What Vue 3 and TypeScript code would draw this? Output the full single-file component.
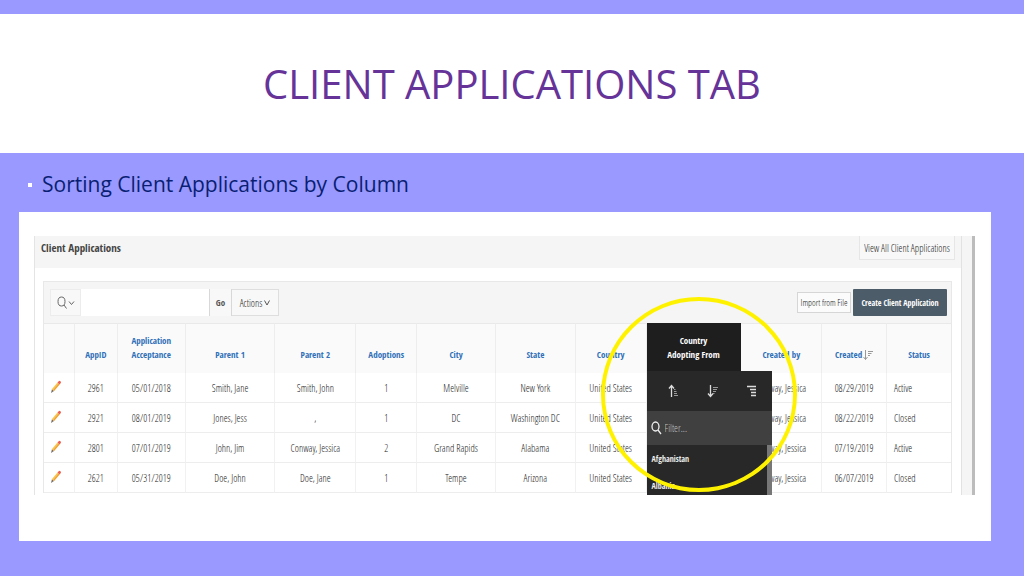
<script setup lang="ts">
import { ref } from 'vue'

interface Column {
  label: string
  weight: number
}

interface Application {
  id: string
  cells: string[]
  createdBy: string
  created: string
  status: string
}

const columns: Column[] = [
  { label: '', weight: 31 },
  { label: 'AppID', weight: 43 },
  { label: 'Application\nAcceptance', weight: 68 },
  { label: 'Parent 1', weight: 90 },
  { label: 'Parent 2', weight: 81 },
  { label: 'Adoptions', weight: 61 },
  { label: 'City', weight: 79 },
  { label: 'State', weight: 80 },
  { label: 'Country', weight: 71 },
  { label: 'Country\nAdopting From', weight: 95 },
  { label: 'Created by', weight: 81 },
  { label: 'Created', weight: 65 },
  { label: 'Status', weight: 64 },
]
const totalWeight = columns.reduce((sum, c) => sum + c.weight, 0)

const rows: Application[] = [
  { id: '2961', cells: ['05/01/2018', 'Smith, Jane', 'Smith, John', '1', 'Melville', 'New York', 'United States'], createdBy: 'Conway, Jessica', created: '08/29/2019', status: 'Active' },
  { id: '2921', cells: ['08/01/2019', 'Jones, Jess', ',', '1', 'DC', 'Washington DC', 'United States'], createdBy: 'Conway, Jessica', created: '08/22/2019', status: 'Closed' },
  { id: '2801', cells: ['07/01/2019', 'John, Jim', 'Conway, Jessica', '2', 'Grand Rapids', 'Alabama', 'United States'], createdBy: 'Conway, Jessica', created: '07/19/2019', status: 'Active' },
  { id: '2621', cells: ['05/31/2019', 'Doe, John', 'Doe, Jane', '1', 'Tempe', 'Arizona', 'United States'], createdBy: 'Conway, Jessica', created: '06/07/2019', status: 'Closed' },
]

const countries = ['Afghanistan', 'Albania']
const search = ref('')
const filter = ref('')
</script>

<template>
  <main class="slide">
    <header class="banner">
      <h1>CLIENT APPLICATIONS TAB</h1>
    </header>

    <ul class="points">
      <li>Sorting Client Applications by Column</li>
    </ul>

    <section class="card">
      <div class="capture">
        <div class="page">
          <div class="page-head">
            <h2>Client Applications</h2>
            <button type="button" class="view-all">View All Client Applications</button>
          </div>

          <div class="report">
            <div class="toolbar">
              <button type="button" class="picker" aria-label="Select columns to search">
                <svg width="18" height="14" viewBox="0 0 18 14" fill="none" stroke="#666" stroke-width="1">
                  <ellipse cx="4.5" cy="5.5" rx="3.5" ry="4.5" />
                  <path d="M7 9l2.500 3.500M12 5.500l2.500 3 2.500-3" />
                </svg>
              </button>
              <input v-model="search" type="search" class="search" aria-label="Search applications" />
              <button type="button" class="go">Go</button>
              <button type="button" class="actions">
                Actions
                <svg width="6" height="6" viewBox="0 0 6 6" fill="none" stroke="#555"><path d="M.5.5L3 5 5.500.5" /></svg>
              </button>
              <span class="spacer"></span>
              <button type="button" class="import">Import from File</button>
              <button type="button" class="create">Create Client Application</button>
            </div>

            <table>
              <colgroup>
                <col v-for="(c, i) in columns" :key="i" :style="{ width: (c.weight / totalWeight) * 100 + '%' }" />
              </colgroup>
              <thead>
                <tr>
                  <th v-for="(c, i) in columns" :key="i" scope="col" :class="{ open: i === 9 }">
                    <span class="label">{{ c.label }}</span>
                    <svg v-if="c.label === 'Created'" class="sorted" width="10" height="10" viewBox="0 0 10 10" fill="none" stroke="#999">
                      <path d="M2.500 0v9.500M.5 7l2 2.500 2-2.500M5 1.500h5M5 3.500h3.500M5 5.500h2" />
                    </svg>
                    <template v-if="i === 9">
                      <div class="menu">
                        <div class="sorts">
                          <button type="button" aria-label="Sort ascending">
                            <svg width="12" height="14" viewBox="0 0 12 14" fill="none" stroke="#ddd">
                              <path stroke-width="1.300" d="M3.500 13V1.500M1 4.500l2.500-3 2.500 3" />
                              <path stroke="#999" d="M6 5.500h1.500M6 7.500h2.500M6 9.500h3M6 11.500h4" />
                            </svg>
                          </button>
                          <button type="button" aria-label="Sort descending">
                            <svg width="12" height="14" viewBox="0 0 12 14" fill="none" stroke="#ddd">
                              <path stroke-width="1.300" d="M3.500 1v11.500M1 9.500l2.500 3 2.500-3" />
                              <path stroke="#999" d="M6 3.500h5M6 5.500h4M6 7.500h3M6 9.500h1.500" />
                            </svg>
                          </button>
                          <button type="button" aria-label="Control break">
                            <svg width="12" height="14" viewBox="0 0 12 14" fill="none" stroke="#ddd" stroke-width="1.300">
                              <path d="M1 2.500h9M4 5.500h6M5 8.500h5M5 11.500h5" />
                            </svg>
                          </button>
                        </div>
                        <label class="filter">
                          <svg width="11" height="14" viewBox="0 0 11 14" fill="none" stroke="#eee" stroke-width="1.300">
                            <ellipse cx="4.500" cy="5.500" rx="3.500" ry="4.500" />
                            <path d="M7 9l3 4" />
                          </svg>
                          <input v-model="filter" type="text" placeholder="Filter..." aria-label="Filter" />
                        </label>
                        <ul class="options">
                          <li v-for="name in countries" :key="name"><button type="button">{{ name }}</button></li>
                        </ul>
                        <span class="thumb"></span>
                      </div>
                      <span class="ring"></span>
                    </template>
                  </th>
                </tr>
              </thead>
              <tbody>
                <tr v-for="r in rows" :key="r.id">
                  <td>
                    <button type="button" class="edit" :aria-label="'Edit ' + r.id">
                      <svg width="12" height="14" viewBox="0 0 12 14">
                        <path d="M1 13l1-4 2 2z" fill="#77706a" />
                        <path d="M2 9l5.500-6.500 2 2L4 11z" fill="#f9c650" />
                        <path d="M3.200 10.200l5.400-6.700.9 1L4 11z" fill="#f0a03c" />
                        <path d="M7.500 2.500L9.200.800q1.800 0 1.800 1.900L9.500 4.500z" fill="#ea5f50" />
                      </svg>
                    </button>
                  </td>
                  <td>{{ r.id }}</td>
                  <td v-for="(cell, i) in r.cells" :key="i">{{ cell }}</td>
                  <td></td>
                  <td>{{ r.createdBy }}</td>
                  <td>{{ r.created }}</td>
                  <td class="status">{{ r.status }}</td>
                </tr>
              </tbody>
            </table>
          </div>
        </div>
      </div>
    </section>
  </main>
</template>

<style>
body {
  margin: 0;
  background: #9999ff;
}
</style>

<style scoped>
* {
  box-sizing: border-box;
}

.slide {
  min-height: 100vh;
  padding-top: 14px;
  background: #9999ff;
  font-family: "Open Sans Condensed Light", "Open Sans Condensed", Lato, sans-serif;
  font-weight: 400;
}

.banner {
  display: flex;
  align-items: center;
  justify-content: center;
  height: 139px;
  background: #fff;
}

h1 {
  margin: 0;
  color: #663399;
  font: 400 40px/48px "Open Sans", "Noto Sans", sans-serif;
}

.points {
  margin: 0;
  padding: 16px 28px 12px;
  list-style: none;
}

.points li {
  display: flex;
  align-items: center;
  gap: 10px;
  color: #0a1f73;
  font: 400 21px/31px "Open Sans", "Noto Sans", sans-serif;
}

.points li::before {
  content: "";
  width: 4px;
  height: 4px;
  background: #fff;
}

.card {
  margin: 0 33px 35px 19px;
  padding: 24px 16px 46px 15px;
  background: #fff;
}

.capture {
  height: 259px;
  overflow: hidden;
  border-left: 1px solid #e4e4e4;
  border-right: 3px solid #bcbcbc;
  background: #f5f5f5;
}

.page {
  margin-right: 10px;
  padding-bottom: 10px;
  background: #fff;
  border-right: 1px solid #e2e2e2;
}

.page-head {
  display: flex;
  align-items: flex-start;
  justify-content: space-between;
  height: 32px;
  padding: 0 6px;
  background: #f5f5f5;
}

h2 {
  margin: 0;
  color: #444;
  font-family: "Open Sans Condensed", Lato, sans-serif;
  font-size: 11px;
  font-weight: 700;
  line-height: 23px;
}

button,
input {
  margin: 0;
  padding: 0;
  border: 0;
  border-radius: 0;
  background: none;
  font: inherit;
  font-size: 10px;
  color: #222;
  white-space: nowrap;
}

.view-all {
  width: 96px;
  height: 24px;
  border: 1px solid #e6e6e6;
  border-top: 0;
  background: #f8f8f8;
}

.report {
  margin: 13px 9px 0 8px;
  border: 1px solid #e8e8e8;
  border-bottom: 0;
}

.toolbar {
  display: flex;
  align-items: center;
  height: 41px;
  padding: 0 4px 0 6px;
  background: #f5f5f5;
}

.toolbar button {
  display: flex;
  flex-shrink: 0;
  align-items: center;
  justify-content: center;
  gap: 2px;
}

.toolbar .picker {
  width: 31px;
  height: 27px;
  border: 1px solid #ececec;
  background: #f8f8f8;
}

.search {
  width: 128px;
  height: 27px;
  padding: 0 4px;
  background: #fff;
}

.toolbar .go {
  width: 23px;
  height: 27px;
  border: 1px solid #d8d8d8;
  border-width: 0 1px;
  background: #f8f8f8;
  color: #555;
  font-family: "Open Sans Condensed", Lato, sans-serif;
  font-size: 9px;
  font-weight: 700;
}

.toolbar .actions {
  width: 47px;
  height: 27px;
  border: 1px solid #dedede;
  border-left: 0;
  background: #f8f8f8;
}

.spacer {
  flex: 1;
}

.toolbar .import {
  width: 54px;
  height: 21px;
  margin-right: 2px;
  border: 1px solid #d6d6d6;
  background: #fbfbfb;
  font-size: 9px;
}

.toolbar .create {
  width: 94px;
  height: 27px;
  border-radius: 1px;
  background: #4d5c69;
  color: #fff;
  font-family: "Open Sans Condensed", Lato, sans-serif;
  font-size: 8px;
  font-weight: 700;
}

table {
  width: 100%;
  table-layout: fixed;
  border-collapse: separate;
  border-spacing: 0;
  color: #222;
  font-size: 10px;
}

th {
  position: relative;
  height: 50px;
  padding: 0 0 11px;
  border-top: 1px solid #e9e9e9;
  border-right: 1px solid #ededed;
  background: #fafafa;
  color: #2f70b8;
  font-family: "Open Sans Condensed", Lato, sans-serif;
  font-size: 9px;
  font-weight: 700;
  line-height: 14px;
  text-align: center;
  vertical-align: bottom;
}

.label {
  white-space: pre-line;
}

.sorted {
  margin-left: 1px;
  vertical-align: -2px;
}

th.open {
  background: #1e1e1e;
  border-color: #1e1e1e;
  color: #fff;
}

td {
  height: 30px;
  padding: 0;
  border-right: 1px solid #f1f1f1;
  border-bottom: 1px solid #ededed;
  background: #fff;
  text-align: center;
  white-space: nowrap;
}

td.status {
  padding-left: 7px;
  text-align: left;
}

th:last-child,
td:last-child {
  border-right: 0;
}

.edit {
  display: block;
  margin: 0 0 2px 6px;
  line-height: 0;
}

.menu {
  position: absolute;
  z-index: 1;
  top: 47px;
  left: 0;
  width: 125px;
  height: 150px;
  background: #282828;
  color: #eee;
  text-align: left;
}

.sorts {
  display: grid;
  grid-template-columns: repeat(3, 39px);
  align-items: center;
  justify-content: end;
  height: 40px;
}

.sorts button {
  line-height: 0;
}

.filter {
  display: flex;
  align-items: center;
  gap: 3px;
  height: 34px;
  padding-left: 4px;
  background: #404040;
}

.filter input {
  width: 80px;
  color: #ddd;
  font-family: "Open Sans Condensed Light", Lato, sans-serif;
  font-weight: 400;
  outline: 0;
}

.filter input::placeholder {
  color: #c4c4c4;
}

.options {
  margin: 0;
  padding: 0;
  list-style: none;
}

.options button {
  height: 27px;
  padding: 0 5px;
  color: #eee;
  font-family: "Open Sans Condensed", Lato, sans-serif;
  font-size: 8px;
  font-weight: 700;
  line-height: 27px;
}

.options li {
  height: 27px;
}

.thumb {
  position: absolute;
  top: 74px;
  right: 0;
  bottom: 0;
  width: 5px;
  background: #777;
}

.ring {
  position: absolute;
  z-index: 2;
  top: -27px;
  left: -46px;
  width: 196px;
  height: 195px;
  border: 4px solid #fff200;
  border-radius: 50%;
  pointer-events: none;
}
</style>
